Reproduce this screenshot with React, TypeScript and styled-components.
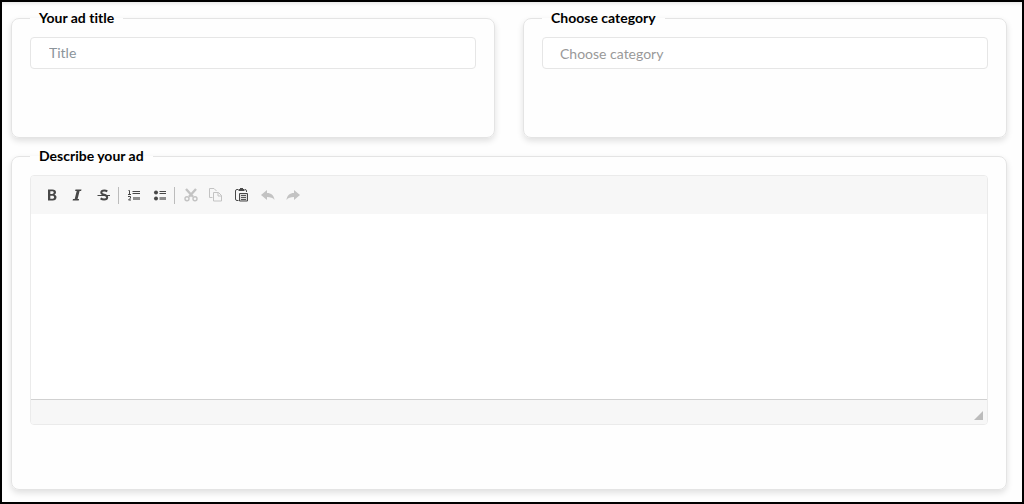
import React from 'react';
import styled, { createGlobalStyle } from 'styled-components';

const GlobalStyle = createGlobalStyle`
  *, *::before, *::after { box-sizing: border-box; }
  body {
    margin: 0;
    background: #fefefe;
    color: #111;
    font-family: Lato, "Open Sans", sans-serif;
    font-size: 14px;
    font-variant-ligatures: none;
  }
`;

const Page = styled.form`
  display: flex;
  flex-direction: column;
  gap: 9px;
  min-height: 100vh;
  padding: 7px 15px 12px 9px;
  border: 2px solid #000;
  box-shadow: inset 0 4px 4px -3px rgba(0, 0, 0, 0.12);
`;

const Columns = styled.div`
  display: grid;
  grid-template-columns: 1fr 1fr;
  gap: 28px;
`;

const Card = styled.fieldset<{ $space: number }>`
  min-width: 0;
  margin: 0;
  padding: 10px 18px ${(p) => p.$space}px;
  border: 1px solid #e4e4e4;
  border-radius: 8px;
  box-shadow: 0 3px 6px rgba(0, 0, 0, 0.12);
`;

const Legend = styled.legend`
  padding: 0 9px;
  color: #000;
  font-size: 14px;
  font-weight: 700;
  line-height: 18px;
`;

const fieldStyle = `
  display: block;
  width: 100%;
  height: 32px;
  border: 1px solid #e6e6e6;
  border-radius: 4px;
  background: #fff;
  font: inherit;
  font-variant-ligatures: none;
`;

const TextField = styled.input`
  ${fieldStyle}
  padding: 0 18px 2px;
  color: #333;
  &::placeholder { color: #8b949b; opacity: 1; }
`;

const SelectField = styled.select`
  ${fieldStyle}
  padding: 0 17px;
  appearance: none;
  color: #999;
`;

const Editor = styled.div`
  border: 1px solid #ebebeb;
  border-radius: 4px;
  overflow: hidden;
`;

const Toolbar = styled.div`
  display: flex;
  align-items: center;
  height: 38px;
  padding: 0 8px;
  background: #f7f7f7;
`;

const ToolButton = styled.button`
  display: flex;
  align-items: center;
  justify-content: center;
  width: 26px;
  height: 26px;
  padding: 0;
  border: 0;
  background: none;
  color: #484848;
  &:disabled { color: #c3c3c3; }
`;

const Separator = styled.span`
  width: 1px;
  height: 17px;
  margin: 0 2px 0 1px;
  background: #bcbcbc;
`;

const Writing = styled.textarea`
  display: block;
  width: 100%;
  height: 185px;
  padding: 16px;
  border: 0;
  resize: none;
  background: #fff;
  font: inherit;
`;

const StatusBar = styled.div`
  display: flex;
  justify-content: flex-end;
  align-items: flex-end;
  height: 25px;
  padding: 4px;
  border-top: 1px solid #d1d1d1;
  background: #f7f7f7;
`;

const Grip = styled.span`
  border-style: solid;
  border-width: 0 0 9px 9px;
  border-color: transparent transparent #bcbcbc transparent;
`;

const icons: Record<string, React.ReactNode> = {
  Bold: (
    <path
      fillRule="evenodd"
      fill="currentColor"
      d="M4 2.500h4.300c2.400 0 3.700 1 3.700 2.800 0 1.200-.6 2-1.600 2.400 1.300.3 2.100 1.200 2.100 2.500 0 2-1.400 3.300-3.800 3.300H4zM6.300 4.300v2.600h1.800c1 0 1.600-.5 1.600-1.300s-.6-1.300-1.600-1.300zM6.300 8.700v3h2.100c1.100 0 1.700-.6 1.700-1.500s-.6-1.500-1.700-1.500z"
    />
  ),
  Italic: (
    <path fill="currentColor" d="M5.500 2.500H11.500l-.4 1.600h-1.500L7.600 11.900h1.500L8.700 13.500H2.600L3 11.900h1.700L6.700 4.100H5.100z" />
  ),
  Strikethrough: (
    <g fill="none" stroke="currentColor">
      <path strokeWidth="2" d="M11.300 4.300C10.400 3.700 9.500 3.500 8.300 3.500 6.500 3.500 5.300 4.200 5.300 5.500 5.300 6.900 6.500 7.300 8 7.700 9.900 8.200 11.200 8.800 11.200 10.300 11.200 11.700 10 12.500 8.100 12.500 6.700 12.500 5.600 12.100 4.600 11.400" />
      <path strokeWidth="1.200" d="M1.500 8.500h12.500" />
    </g>
  ),
  'Numbered list': (
    <g>
      <path fill="none" stroke="currentColor" d="M2.500 3.500h1v4M2 7.500h3M2 9.500h2.500v1.500l-2 2H5" />
      <path fill="none" stroke="currentColor" d="M6.500 4.500H14M6.500 6.500H14" />
      <path fill="currentColor" opacity=".6" d="M7 10h7v3H7z" />
    </g>
  ),
  'Bulleted list': (
    <g fill="currentColor">
      <circle cx="4" cy="5.500" r="2" />
      <circle cx="4" cy="11.500" r="2" />
      <path d="M7.500 4h6.500v1H7.500zM7.500 6h6.500v1H7.500z" />
      <path opacity=".6" d="M7.500 10h6.500v3H7.500z" />
    </g>
  ),
  Cut: (
    <g fill="none" stroke="currentColor">
      <path strokeWidth="2.400" d="M4 2L11 9.800M14 2L7 9.800" />
      <circle cx="5" cy="11.700" r="2" strokeWidth="1.400" />
      <circle cx="13" cy="11.700" r="2" strokeWidth="1.400" />
    </g>
  ),
  Copy: (
    <g fill="none" stroke="currentColor">
      <path d="M4.500 10.500H1.500v-9h4.500l2.500 2.500" />
      <path d="M5.500 5.500h5l3 3v5.500h-8zM10 5.500v3.500h3.500" />
    </g>
  ),
  Paste: (
    <g>
      <path fill="none" stroke="currentColor" d="M4 2.500H3Q1.500 2.500 1.500 4V12Q1.500 13.500 3 13.500H4.500M11 2.500Q12.500 2.500 12.500 4V5" />
      <path fill="currentColor" d="M4.500 2h1.500V1h3v1h1.500v2h-6z" />
      <path fill="#ddd" stroke="currentColor" d="M5.500 6.500h8v7.500h-8z" />
      <path fill="none" stroke="currentColor" strokeWidth=".9" d="M7 8.500h5M7 10.500h5M7 12.500h5" />
    </g>
  ),
  Undo: (
    <path fill="currentColor" d="M1 8L7 3v3c4.200 0 7 2.300 7.500 7C13 10.700 10.500 10 7 10v3z" />
  ),
  Redo: (
    <path fill="currentColor" d="M14 8L8 3v3c-4.200 0-7 2.300-7.500 7C2 10.700 4.500 10 8 10v3z" />
  ),
};

function Tool({ name, disabled = false }: { name: string; disabled?: boolean }) {
  return (
    <ToolButton type="button" aria-label={name} title={name} disabled={disabled}>
      <svg width="16" height="16" viewBox="0 0 16 16" aria-hidden="true">
        {icons[name]}
      </svg>
    </ToolButton>
  );
}

export default function App() {
  return (
    <>
      <GlobalStyle />
      <Page>
        <Columns>
          <Card $space={68}>
            <Legend id="title-label">Your ad title</Legend>
            <TextField type="text" placeholder="Title" aria-labelledby="title-label" />
          </Card>
          <Card $space={68}>
            <Legend id="category-label">Choose category</Legend>
            <SelectField aria-labelledby="category-label" defaultValue="">
              <option value="">Choose category</option>
            </SelectField>
          </Card>
        </Columns>
        <Card $space={64}>
          <Legend id="describe-label">Describe your ad</Legend>
          <Editor>
            <Toolbar role="toolbar" aria-label="Formatting">
              <Tool name="Bold" />
              <Tool name="Italic" />
              <Tool name="Strikethrough" />
              <Separator />
              <Tool name="Numbered list" />
              <Tool name="Bulleted list" />
              <Separator />
              <Tool name="Cut" disabled />
              <Tool name="Copy" disabled />
              <Tool name="Paste" />
              <Tool name="Undo" disabled />
              <Tool name="Redo" disabled />
            </Toolbar>
            <Writing aria-labelledby="describe-label" />
            <StatusBar>
              <Grip />
            </StatusBar>
          </Editor>
        </Card>
      </Page>
    </>
  );
}
